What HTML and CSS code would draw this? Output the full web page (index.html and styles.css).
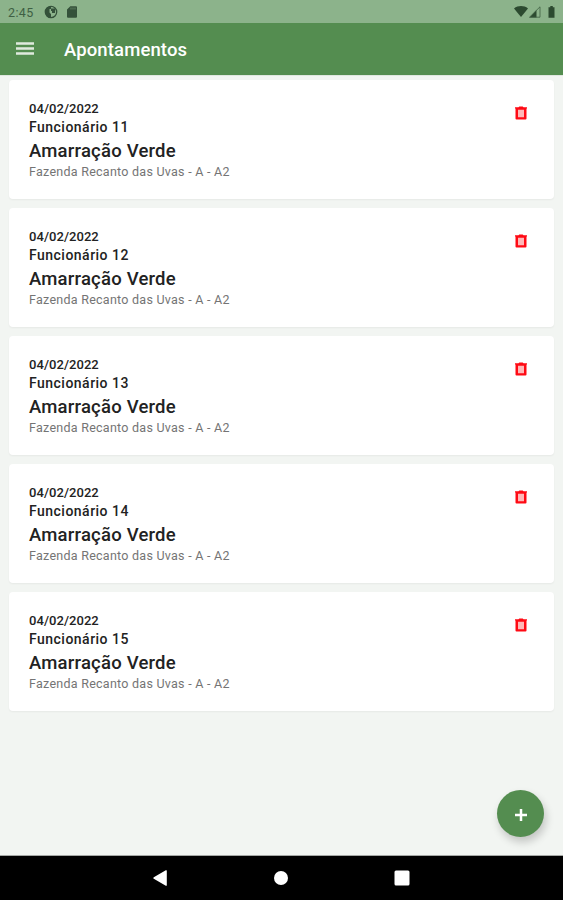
FILE: index.html
```html
<!DOCTYPE html>
<html lang="pt-BR">
<head>
<meta charset="utf-8">
<title>Apontamentos</title>
<link rel="stylesheet" href="styles.css">
</head>
<body>
<svg width="0" height="0" class="defs">
  <symbol id="trash" viewBox="0 0 14 16">
    <path fill="#ffb8b8" d="M3 4h8v9H3z"/>
    <path fill="#ff0a14" fill-rule="evenodd" d="M1 2.200h3.500l.8-.8h3.400l.8.8H13v1.300h-.5V13.500a1 1 0 0 1-1 1h-9a1 1 0 0 1-1-1V3.500H1zM4 4.700v7.600h6V4.700z"/>
  </symbol>
</svg>
<div class="status">
  <span class="clock">2:45</span>
  <svg class="globe" width="14" height="14" viewBox="0 0 14 14"><circle cx="7" cy="7" r="5.700" fill="none" stroke="#34513a" stroke-width="1.300"/><path fill="#34513a" d="M1.300 7C1.300 3.500 4 1.300 7 1.300V4H5.500v3.500L7 9v3.700C3.500 12.700 1.300 10 1.300 7zM7 3.500h4V8H8V6H7z"/></svg>
  <svg class="sd" width="10" height="12" viewBox="0 0 10 12"><path fill="#34513a" d="M3.300.3H9a1 1 0 0 1 1 1v9.400a1 1 0 0 1-1 1H1a1 1 0 0 1-1-1V3.600z"/><path stroke="#6f9370" stroke-width=".8" d="M4 1.500v2M6 1.500v2M8 1.500v2"/></svg>
  <svg class="signals" width="43" height="14" viewBox="0 0 43 14"><g fill="#2c4a30"><path d="M0 3.500C4 .3 10 .3 14 3.500L7 12z"/><path d="M15.500 12.500L22.500 5v7.500z"/><path d="M15.500 12.200L26 1.800v10.400z" fill="none" stroke="#3f6043" stroke-width=".8"/><path d="M36.300 1h2.500v1.200h1.700v10.500h-6V2.200h1.800z"/></g></svg>
</div>
<header class="bar">
  <svg class="menu" width="18" height="13" viewBox="0 0 18 13"><path fill="#dfeade" d="M0 .2h18v2.500H0zM0 5.200h18v2.500H0zM0 10.200h18v2.500H0z"/></svg>
  <h1>Apontamentos</h1>
</header>
<main class="list">
  <article class="card"><div><p class="date">04/02/2022</p><p class="worker">Funcionário 11</p><h2>Amarração Verde</h2><p class="farm">Fazenda Recanto das Uvas - A - A2</p></div><svg class="trash"><use href="#trash"/></svg></article>
  <article class="card"><div><p class="date">04/02/2022</p><p class="worker">Funcionário 12</p><h2>Amarração Verde</h2><p class="farm">Fazenda Recanto das Uvas - A - A2</p></div><svg class="trash"><use href="#trash"/></svg></article>
  <article class="card"><div><p class="date">04/02/2022</p><p class="worker">Funcionário 13</p><h2>Amarração Verde</h2><p class="farm">Fazenda Recanto das Uvas - A - A2</p></div><svg class="trash"><use href="#trash"/></svg></article>
  <article class="card"><div><p class="date">04/02/2022</p><p class="worker">Funcionário 14</p><h2>Amarração Verde</h2><p class="farm">Fazenda Recanto das Uvas - A - A2</p></div><svg class="trash"><use href="#trash"/></svg></article>
  <article class="card"><div><p class="date">04/02/2022</p><p class="worker">Funcionário 15</p><h2>Amarração Verde</h2><p class="farm">Fazenda Recanto das Uvas - A - A2</p></div><svg class="trash"><use href="#trash"/></svg></article>
  <button class="fab" aria-label="Adicionar"><svg width="12" height="12" viewBox="0 0 12 12"><path stroke="#fff" stroke-width="2.500" d="M6 0v12M0 6h12"/></svg></button>
</main>
<nav class="nav">
  <svg width="14" height="16" viewBox="0 0 14 16"><path fill="#fff" d="M.8 7.200L12.800.3q1-.5 1 .5v14.400q0 1-1 .5L.8 8.800q-1-.8 0-1.600z"/></svg>
  <svg width="14" height="14" viewBox="0 0 14 14"><circle cx="7" cy="7" r="7" fill="#fff"/></svg>
  <svg width="16" height="16" viewBox="0 0 16 16"><rect x=".5" y=".5" width="15" height="15" rx="1.500" fill="#fff"/></svg>
</nav>
</body>
</html>
```
FILE: styles.css
```css
* { box-sizing: border-box; margin: 0; padding: 0; }
body { width: 563px; height: 900px; display: flex; flex-direction: column; overflow: hidden; background: #f2f5f2; font-family: Roboto, sans-serif; }
.defs { position: absolute; }
svg { display: block; flex: none; }
.status { height: 23px; flex: none; background: #8cb38b; display: flex; align-items: center; padding: 1px 7px 0 8px; }
.clock { font-size: 12.500px; letter-spacing: .4px; color: #3f5f43; width: 36px; }
.sd { margin-left: 9px; }
.signals { margin-left: auto; margin-right: -1px; }
.bar { height: 52px; flex: none; background: #548d50; display: flex; align-items: center; padding-left: 16px; }
.menu { margin-top: -1px; }
h1 { margin-left: 30px; margin-top: 2px; font-size: 18.500px; font-weight: 500; line-height: 24px; color: #fff; letter-spacing: .12px; }
.list { position: relative; flex: 1; padding: 4px 9.500px 0 9px; display: flex; flex-direction: column; gap: 9.500px; border-top: 1px solid #dfe7df; border-bottom: 1px solid #a5a8a5; }
.card { height: 118.500px; background: #fff; border-radius: 4px; box-shadow: 0 1px 2px rgba(0,0,0,.05); display: flex; justify-content: space-between; padding: 19px 26px 0 20px; color: #222; }
.date { font-size: 13px; line-height: 19px; letter-spacing: .05px; font-weight: 500; }
.worker { font-size: 14px; line-height: 18px; letter-spacing: .48px; font-weight: 500; }
h2 { font-size: 18.500px; line-height: 25px; letter-spacing: .2px; font-weight: 500; padding-top: 3px; }
.farm { font-size: 12.500px; line-height: 15px; letter-spacing: .26px; color: #747474; }
.trash { width: 14px; height: 16px; margin-top: 6px; }
.fab { position: absolute; right: 19px; bottom: 18px; width: 47px; height: 47px; border: 0; border-radius: 50%; background: #548d50; display: flex; align-items: center; justify-content: center; padding-top: 2px; box-shadow: 2px 5px 8px rgba(0,0,0,.2); }
.nav { height: 44px; flex: none; background: #000; display: flex; align-items: center; justify-content: space-between; padding: 0 153px; }
```
